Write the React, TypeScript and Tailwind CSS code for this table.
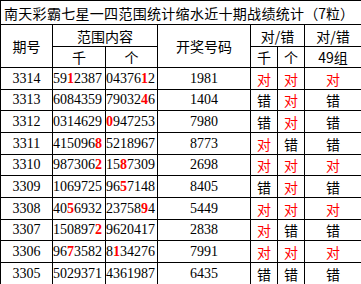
import React from "react";

type Row = {
  qi: string;
  qian: string;
  qianRed: number;
  ge: string;
  geRed: number;
  kj: string;
  r: [boolean, boolean, boolean];
};

const rows: Row[] = [
  { qi: "3314", qian: "5912387", qianRed: 2, ge: "0437612", geRed: 5, kj: "1981", r: [true, true, true] },
  { qi: "3313", qian: "6084359", qianRed: -1, ge: "7903246", geRed: 5, kj: "1404", r: [false, true, false] },
  { qi: "3312", qian: "0314629", qianRed: -1, ge: "0947253", geRed: 0, kj: "7980", r: [false, true, false] },
  { qi: "3311", qian: "4150968", qianRed: 6, ge: "5218967", geRed: -1, kj: "8773", r: [true, false, false] },
  { qi: "3310", qian: "9873062", qianRed: 6, ge: "1587309", geRed: 2, kj: "2698", r: [true, true, true] },
  { qi: "3309", qian: "1069725", qianRed: -1, ge: "9657148", geRed: 2, kj: "8405", r: [false, true, false] },
  { qi: "3308", qian: "4056932", qianRed: 2, ge: "2375894", geRed: 5, kj: "5449", r: [true, true, true] },
  { qi: "3307", qian: "1508972", qianRed: 6, ge: "9620417", geRed: -1, kj: "2838", r: [true, false, false] },
  { qi: "3306", qian: "9673582", qianRed: 2, ge: "8134276", geRed: 1, kj: "7991", r: [true, true, true] },
  { qi: "3305", qian: "5029371", qianRed: -1, ge: "4361987", geRed: -1, kj: "6435", r: [false, false, false] },
];

const heights = ["h-[22px]", "h-[21px]", "h-[22px]", "h-[22px]", "h-[21px]", "h-[22px]", "h-[22px]", "h-[21px]", "h-[22px]", "h-[22px]"];

const cell = "border border-black text-center align-middle p-0";
const serif = "font-['Liberation_Serif',serif] text-[14px]";

function Digits({ value, red }: { value: string; red: number }) {
  return (
    <>
      {value.split("").map((d, i) =>
        i === red ? (
          <span key={i} className="text-[#ff0000] font-bold">
            {d}
          </span>
        ) : (
          <span key={i}>{d}</span>
        )
      )}
    </>
  );
}

function Mark({ ok }: { ok: boolean }) {
  return ok ? <span className="text-[#ff0000]">对</span> : <span className="text-black">错</span>;
}

export default function App() {
  return (
    <div className="w-[361px] h-[284px] overflow-hidden bg-white">
      <table className="table-fixed border-collapse w-[361px] text-black font-['Noto_Sans_CJK_SC','Liberation_Sans',sans-serif] text-[14px] leading-none">
        <colgroup>
          <col className="w-[52px]" />
          <col className="w-[53px]" />
          <col className="w-[52px]" />
          <col className="w-[93px]" />
          <col className="w-[27px]" />
          <col className="w-[27px]" />
          <col className="w-[57px]" />
        </colgroup>
        <tbody>
          <tr className="h-[24px]">
            <td colSpan={7} className="border border-black text-left align-middle p-0 pl-[3px] whitespace-nowrap">
              <div className="flex items-center">
                <span className="tracking-[0.3px]">南天彩霸七星一四范围统计缩水近十期战绩统计</span>
                <span>（</span>
                <span>7粒</span>
                <span>）</span>
              </div>
            </td>
          </tr>
          <tr className="h-[22px]">
            <td rowSpan={2} className={cell}>
              期号
            </td>
            <td colSpan={2} className={cell}>
              范围内容
            </td>
            <td rowSpan={2} className={cell}>
              开奖号码
            </td>
            <td colSpan={2} className={cell}>
              对/错
            </td>
            <td className={cell}>对/错</td>
          </tr>
          <tr className="h-[21px]">
            <td className={cell}>千</td>
            <td className={cell}>个</td>
            <td className={cell}>千</td>
            <td className={cell}>个</td>
            <td className={cell}>49组</td>
          </tr>
          {rows.map((row, i) => (
            <tr key={row.qi} className={heights[i]}>
              <td className={`${cell} ${serif}`}>{row.qi}</td>
              <td className={`${cell} ${serif} text-left`}>
                <Digits value={row.qian} red={row.qianRed} />
              </td>
              <td className={`${cell} ${serif} text-left`}>
                <Digits value={row.ge} red={row.geRed} />
              </td>
              <td className={`${cell} ${serif}`}>{row.kj}</td>
              <td className={cell}>
                <Mark ok={row.r[0]} />
              </td>
              <td className={cell}>
                <Mark ok={row.r[1]} />
              </td>
              <td className={cell}>
                <Mark ok={row.r[2]} />
              </td>
            </tr>
          ))}
        </tbody>
      </table>
    </div>
  );
}
